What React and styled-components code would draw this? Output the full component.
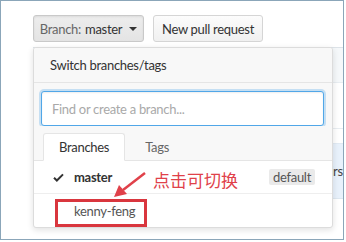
import React from 'react';
import styled, { createGlobalStyle } from 'styled-components';

const Global = createGlobalStyle`
  html, body { margin: 0; padding: 0; background: #fff; }
  body {
    font-family: Lato, "Open Sans", "Noto Sans CJK SC", sans-serif;
    font-size: 13px;
    letter-spacing: -0.3px;
    font-variant-ligatures: none;
  }
`;

const Frame = styled.div`
  position: relative;
  width: 342px;
  height: 238px;
  border: 1px solid #8ba6b9;
  overflow: hidden;
  background: #fff;
`;

const Toolbar = styled.div`
  display: flex;
  gap: 9px;
  padding: 14px 0 0 32px;
`;

const Button = styled.div`
  display: flex;
  align-items: center;
  gap: 4px;
  box-sizing: border-box;
  height: 27px;
  width: ${p => p.w}px;
  padding: 0 8px;
  justify-content: center;
  border: 1px solid ${p => (p.pressed ? '#c9c9c9' : '#d5d5d5')};
  border-radius: 3px;
  background: ${p => (p.pressed ? 'linear-gradient(#ededed, #e4e4e4)' : 'linear-gradient(#fcfcfc, #f0f0f0)')};
  box-shadow: ${p => (p.pressed ? 'inset 0 1px 2px rgba(0,0,0,0.08)' : 'none')};
  color: #333;
  white-space: nowrap;
`;

const Muted = styled.span`
  color: #666;
`;

const Caret = styled.span`
  width: 0;
  height: 0;
  margin-left: 3px;
  border-left: 4px solid transparent;
  border-right: 4px solid transparent;
  border-top: 4px solid #333;
`;

const FileTable = styled.div`
  margin: 5px 0 0 32px;
  border-top: 1px solid #dde3e8;
`;

const TableRow = styled.div`
  box-sizing: border-box;
  height: ${p => p.h}px;
  background: ${p => p.bg || '#fff'};
  border-bottom: 1px solid ${p => p.line || '#e8edf1'};
  display: flex;
  align-items: center;
  color: #444;
  white-space: nowrap;
`;

const CellText = styled.span`
  padding-left: ${p => p.pad}px;
`;

const Menu = styled.div`
  position: absolute;
  left: 32px;
  top: 46px;
  width: 298px;
  border: 1px solid #dcdcdc;
  border-radius: 3px;
  background: #fff;
  box-shadow: 0 2px 6px rgba(0, 0, 0, 0.12);
  overflow: hidden;
`;

const MenuHeader = styled.div`
  box-sizing: border-box;
  height: 35px;
  padding: 0 16px;
  display: flex;
  align-items: center;
  background: #f8f8f8;
  border-bottom: 1px solid #e5e5e5;
  color: #333;
`;

const FilterBox = styled.div`
  padding: 8px 8px 0 7px;
  background: #f8f8f8;
`;

const FilterInput = styled.div`
  box-sizing: border-box;
  height: 35px;
  border: 1px solid #51a7e8;
  border-radius: 3px;
  background: #fff;
  box-shadow: 0 0 0 2px rgba(81, 167, 232, 0.3), inset 0 1px 2px rgba(0,0,0,0.07);
  display: flex;
  align-items: center;
  padding-left: 10px;
  color: #a9a9a9;
`;

const Tabs = styled.div`
  display: flex;
  padding: 7px 0 0 9px;
  background: #f8f8f8;
  border-bottom: 1px solid #e5e5e5;
`;

const Tab = styled.div`
  box-sizing: border-box;
  height: 28px;
  margin-bottom: -1px;
  padding: 0 ${p => (p.active ? 15 : 19)}px;
  display: flex;
  align-items: center;
  color: ${p => (p.active ? '#333' : '#666')};
  background: ${p => (p.active ? '#fff' : 'transparent')};
  border: 1px solid ${p => (p.active ? '#e5e5e5' : 'transparent')};
  border-bottom-color: ${p => (p.active ? '#fff' : 'transparent')};
  border-radius: 3px 3px 0 0;
`;

const Item = styled.div`
  box-sizing: border-box;
  height: 33px;
  display: flex;
  align-items: center;
  padding-left: 19px;
  border-bottom: ${p => (p.last ? 'none' : '1px solid #eee')};
  color: ${p => (p.current ? '#333' : '#555')};
  font-weight: ${p => (p.current ? 700 : 400)};
`;

const CheckSlot = styled.span`
  width: 21px;
  display: flex;
  align-items: center;
`;

const Badge = styled.span`
  margin-left: auto;
  margin-right: 17px;
  padding: 0 4px;
  height: 16px;
  display: flex;
  align-items: center;
  background: #eaeaea;
  border-radius: 2px;
  font-size: 13px;
  font-weight: 400;
  color: #555;
`;

const Note = styled.div`
  position: absolute;
  left: 152px;
  top: 166px;
  font-family: "Noto Sans CJK SC", sans-serif;
  font-size: 17px;
  letter-spacing: 0;
  color: #e0414a;
  white-space: nowrap;
`;

const Arrow = styled.svg`
  position: absolute;
  left: 108px;
  top: 168px;
`;

const Highlight = styled.div`
  position: absolute;
  left: 54px;
  top: 198px;
  width: 92px;
  height: 28px;
  box-sizing: border-box;
  border: 3px solid #d9363e;
`;

const Check = () => (
  <svg width="11" height="9" viewBox="0 0 12 10">
    <path d="M1 5.2 L4.2 8.4 L11 1.5" fill="none" stroke="#333" strokeWidth="2.2" />
  </svg>
);

export default function App() {
  return (
    <>
      <Global />
      <Frame>
        <Toolbar>
          <Button w={111} pressed>
            <Muted>Branch:</Muted> master <Caret />
          </Button>
          <Button w={110}>New pull request</Button>
        </Toolbar>

        <FileTable>
          <TableRow h={35} bg="#f5f8fa" />
          <TableRow h={46} />
          <TableRow h={15} line="#e1eaf3" />
          <TableRow h={55} bg="#e8f1fb" line="#dde7f0">
            <CellText pad={293}>first</CellText>
          </TableRow>
        </FileTable>

        <Menu>
          <MenuHeader>Switch branches/tags</MenuHeader>
          <FilterBox>
            <FilterInput>Find or create a branch...</FilterInput>
          </FilterBox>
          <Tabs>
            <Tab active>Branches</Tab>
            <Tab>Tags</Tab>
          </Tabs>
          <Item current>
            <CheckSlot><Check /></CheckSlot>
            master
            <Badge>default</Badge>
          </Item>
          <Item last>
            <CheckSlot />
            kenny-feng
          </Item>
        </Menu>

        <Arrow width="40" height="32" viewBox="0 0 40 32">
          <line x1="36" y1="4" x2="14" y2="21" stroke="#e0414a" strokeWidth="2.5" />
          <polygon points="5,28 10,16 18,25" fill="#e0414a" />
        </Arrow>
        <Note>点击可切换</Note>
        <Highlight />
      </Frame>
    </>
  );
}
